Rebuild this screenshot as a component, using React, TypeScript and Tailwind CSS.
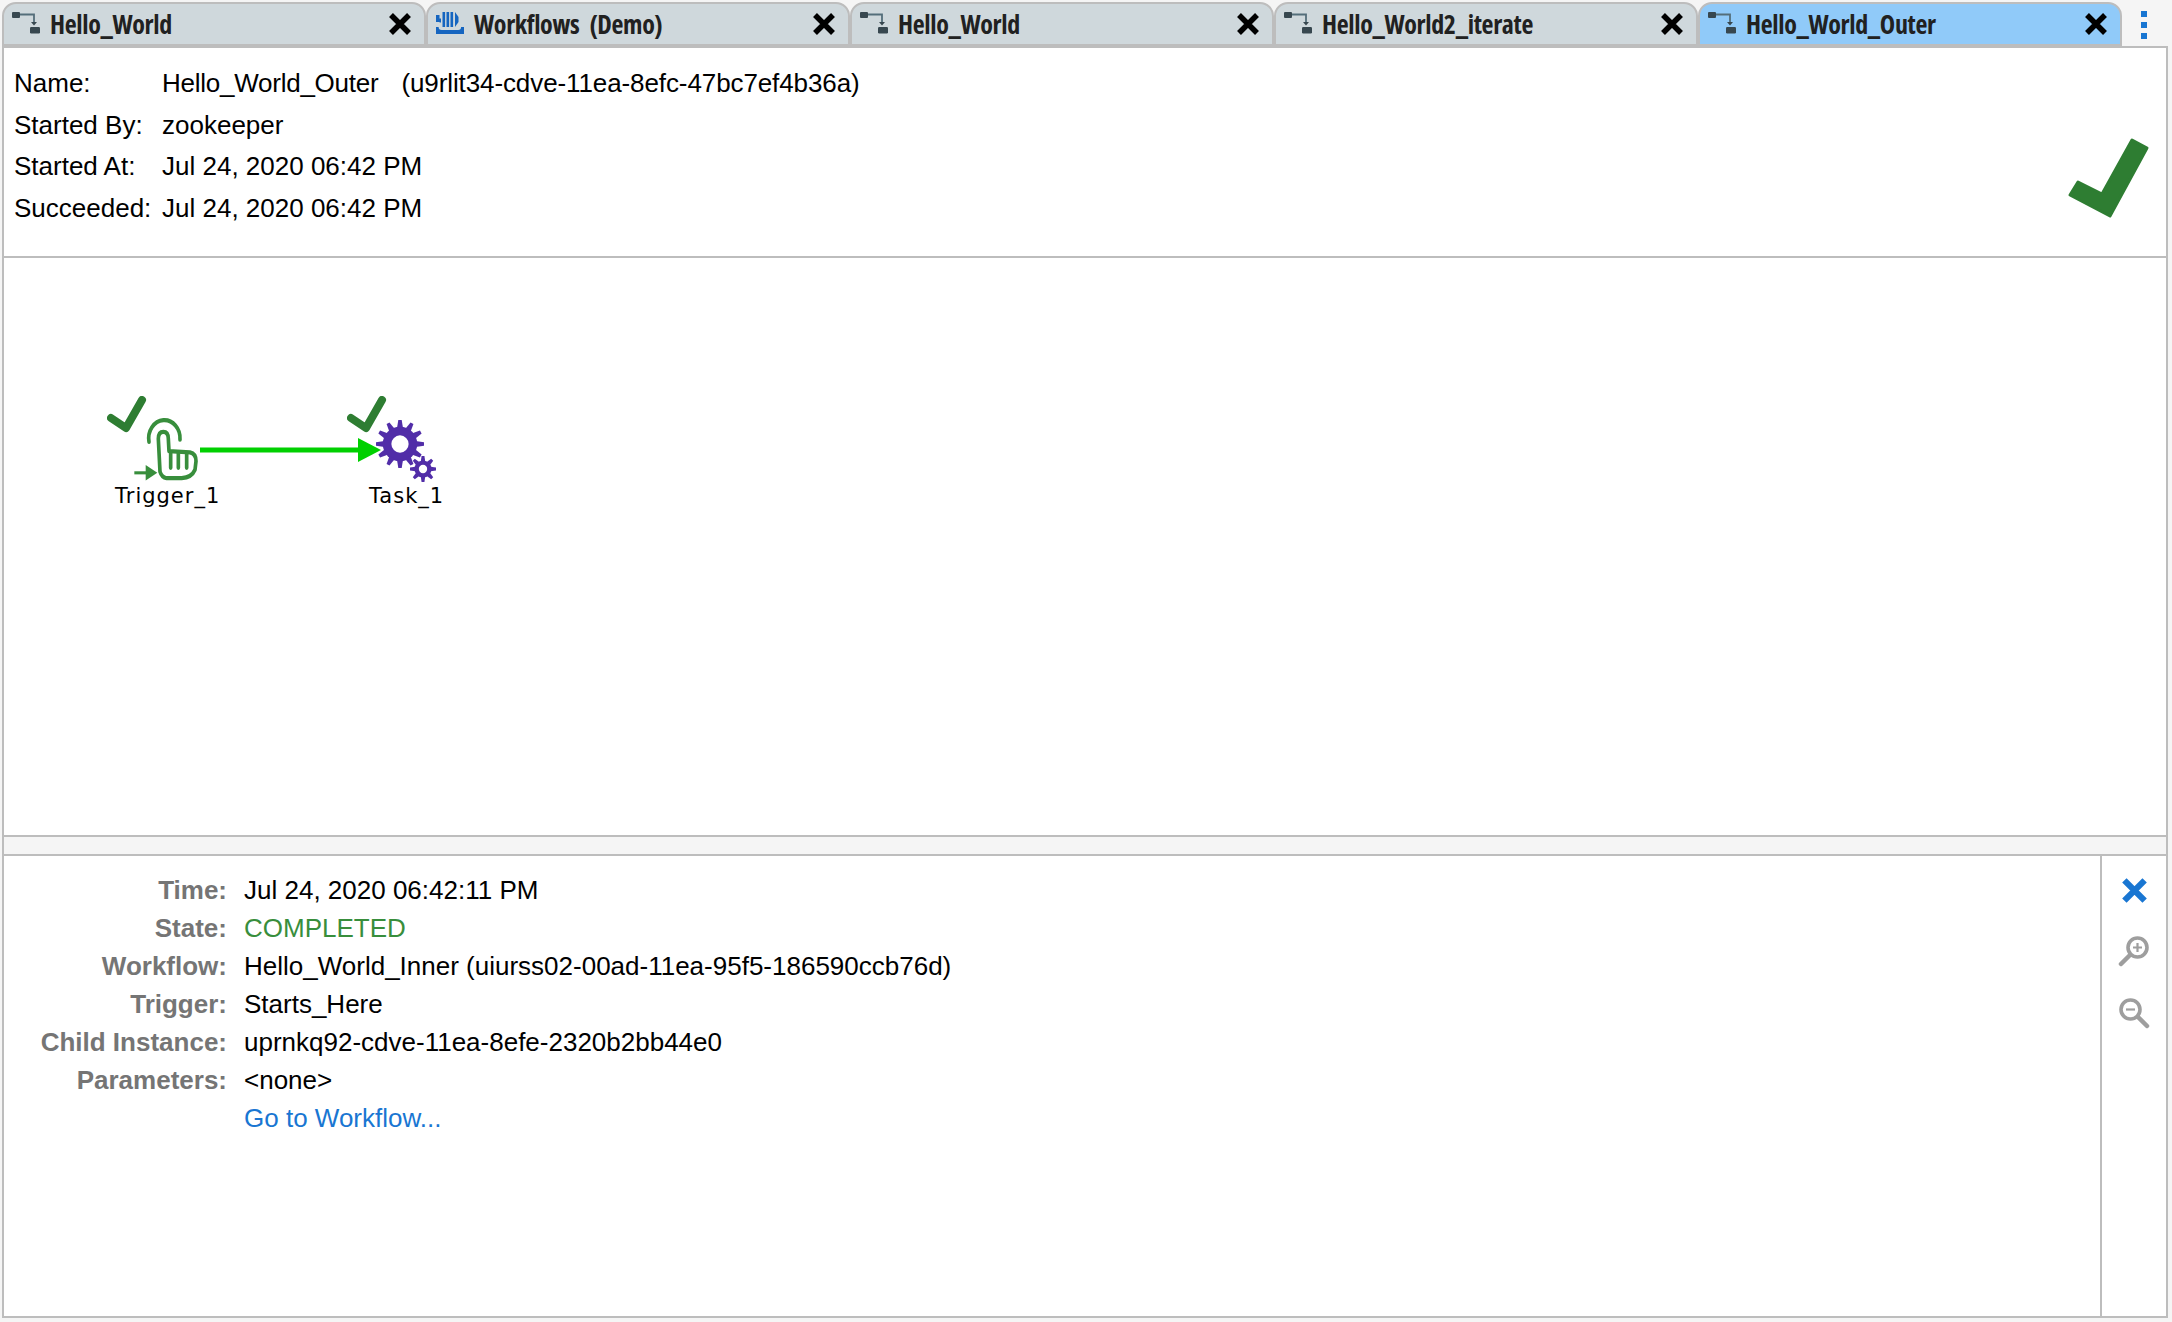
const tabs = [
  { name: "Hello_World", icon: "flow" },
  { name: "Workflows (Demo)", icon: "demo" },
  { name: "Hello_World", icon: "flow" },
  { name: "Hello_World2_iterate", icon: "flow" },
  { name: "Hello_World_Outer", icon: "flow", active: true },
];

const headerRows = [
  ["Name:", "Hello_World_Outer", "(u9rlit34-cdve-11ea-8efc-47bc7ef4b36a)"],
  ["Started By:", "zookeeper"],
  ["Started At:", "Jul 24, 2020 06:42 PM"],
  ["Succeeded:", "Jul 24, 2020 06:42 PM"],
];

const FlowIcon = () => (
  <svg width="28" height="22" viewBox="0 0 28 22" className="shrink-0">
    <rect x="0" y="0" width="8" height="6" rx="1" fill="#37474f" />
    <path d="M8 2.5h14v9" fill="none" stroke="#546e7a" strokeWidth="1.8" />
    <path d="M19 10h6l-3 3.5z" fill="#37474f" />
    <rect x="18" y="15" width="10" height="6.5" rx="1.2" fill="#37474f" />
  </svg>
);

const DemoIcon = () => (
  <svg width="28" height="22" viewBox="0 0 28 22" className="shrink-0">
    <g fill="#1565c0">
      <rect x="6.5" y="0" width="2.6" height="15" />
      <rect x="10.5" y="0" width="2.6" height="15" />
      <rect x="14.5" y="0" width="2.6" height="15" />
      <path d="M19 0l3.5 5v5l-3.5 5z" />
      <path d="M0 3h3.5v3.5H5v4H3.5V10H0z" />
      <path d="M0 15h2.6q0 3 3 3h16.5q3 0 3-3H28v7H0z" />
    </g>
  </svg>
);

const CloseIcon = ({ color = "#000000", size = 24 }: { color?: string; size?: number }) => (
  <svg width={size} height={size} viewBox="0 0 20 20" className="shrink-0">
    <path d="M2.5 2.5l15 15M17.5 2.5l-15 15" stroke={color} strokeWidth="4.6" />
  </svg>
);

const Check = () => (
  <svg width="40" height="38" viewBox="0 0 40 38">
    <path d="M4 22l15 10L35 4" fill="none" stroke="#2e7d32" strokeWidth="8" strokeLinejoin="round" strokeLinecap="round" />
  </svg>
);

const Gear = ({ size, teeth, body, hole, base, tip }: { size: number; teeth: number; body: number; hole: number; base: number; tip: number }) => {
  const angles = Array.from({ length: teeth }, (_, i) => (i * 360) / teeth);
  return (
    <svg width={size} height={size} viewBox="-50 -50 100 100" className="block">
      <circle r={body} fill="#512da8" />
      {angles.map((a) => (
        <polygon
          key={a}
          points={`${-base / 2},${-body + 4} ${-tip / 2},-50 ${tip / 2},-50 ${base / 2},${-body + 4}`}
          fill="#512da8"
          transform={`rotate(${a})`}
        />
      ))}
      <circle r={hole} fill="#ffffff" />
    </svg>
  );
};

export default function App() {
  return (
    <div className="w-[2172px] h-[1322px] bg-[#f5f5f5] flex flex-col overflow-hidden font-['Liberation_Sans',Arial,sans-serif] text-black">
      {/* tab strip */}
      <div className="flex h-[46px] pt-[2px] pl-[2px] items-start relative">
        {tabs.map((t, i) => (
          <div
            key={i}
            className={`w-[424px] h-[44px] flex items-center pl-[8px] pr-[12px] rounded-t-[14px] border-2 border-[#bdbdbd] ${t.active ? "bg-[#90caf9]" : "bg-[#cfd8dc]"}`}
          >
            <div className="-mt-[3px]">{t.icon === "flow" ? <FlowIcon /> : <DemoIcon />}</div>
            <span className="ml-[10px] flex-1 text-[26px] tracking-[-0.35px] [word-spacing:6px] font-bold font-stretch-condensed text-[#212121] font-['Open_Sans',sans-serif]">{t.name}</span>
            <CloseIcon />
          </div>
        ))}
        <div className="ml-[19px] mt-[9px] flex flex-col gap-[5px]">
          <div className="w-[6px] h-[6px] bg-[#1976d2]" />
          <div className="w-[6px] h-[6px] bg-[#1976d2]" />
          <div className="w-[6px] h-[6px] bg-[#1976d2]" />
        </div>
      </div>

      <div className="w-[2166px] h-[1272px] ml-[2px] border-2 border-[#bdbdbd] bg-white flex flex-col">
        {/* instance summary */}
        <div className="h-[210px] shrink-0 border-b-2 border-[#bdbdbd] relative pt-[15px] pl-[10px] text-[26px]">
          {headerRows.map((r) => (
            <div key={r[0]} className="h-[41.6px] flex items-center">
              <span className="w-[148px] shrink-0">{r[0]}</span>
              <span className={r[2] ? "tracking-[-0.25px]" : ""}>{r[1]}</span>
              {r[2] && <span className="ml-[23px] tracking-[-0.1px]">{r[2]}</span>}
            </div>
          ))}
          <svg width="90" height="90" viewBox="0 0 90 90" className="absolute right-[11px] top-[87px]">
            <path d="M5 60L13 47L37 59L67 5L82 13L45 81z" fill="#2e7d32" stroke="#2e7d32" strokeWidth="3" strokeLinejoin="round" />
          </svg>
        </div>

        {/* diagram canvas */}
        <div className="relative flex-1">
          <div className="absolute left-[103px] top-[138px]"><Check /></div>
          <div className="absolute left-[343px] top-[138px]"><Check /></div>

          <svg width="90" height="87" viewBox="0 0 270 225" preserveAspectRatio="none" className="absolute left-[121px] top-[146px]">
            <g fill="none" stroke="#388e3c" strokeWidth="11" strokeLinecap="round" strokeLinejoin="round">
              <path d="M72 98A47 47 0 1 1 165 92" />
              <path d="M105 175L100 90Q100 72 115 72Q130 72 130 90L132 122L195 125Q213 128 213 148L210 170Q200 190 170 192L125 192Q110 190 105 175Z" />
              <path d="M137 125V165M160 128V165M185 130V165" />
            </g>
            <path d="M28 178H70" stroke="#388e3c" strokeWidth="8" />
            <path d="M62 158L97 178L62 198z" fill="#388e3c" />
          </svg>

          <svg width="190" height="30" viewBox="0 0 190 30" className="absolute left-[194px] top-[177px]">
            <path d="M2 15h170" stroke="#00d000" strokeWidth="5" />
            <path d="M160 3l23 12-23 12z" fill="#00d000" />
          </svg>

          <div className="absolute left-[372px] top-[162px]"><Gear size={48} teeth={12} body={36} hole={18} base={13} tip={7} /></div>
          <div className="absolute left-[406px] top-[198px]"><Gear size={26} teeth={8} body={33} hole={16} base={17} tip={11} /></div>

          <div className="absolute left-[111px] top-[224px] text-[21px] tracking-[1px] leading-[28px] font-['DejaVu_Sans',sans-serif]">Trigger_1</div>
          <div className="absolute left-[365px] top-[224px] text-[21px] tracking-[1px] leading-[28px] font-['DejaVu_Sans',sans-serif]">Task_1</div>
        </div>

        {/* splitter */}
        <div className="h-[21px] shrink-0 bg-[#f5f5f5] border-y-2 border-[#bdbdbd]" />

        {/* event detail */}
        <div className="h-[460px] shrink-0 flex">
          <div className="flex-1 pt-[15px] text-[26px] grid grid-cols-[223px_1fr] content-start gap-x-[17px] auto-rows-[38px] items-center">
            <span className="text-right font-bold text-[#757575]">Time:</span>
            <span>Jul 24, 2020 06:42:11 PM</span>
            <span className="text-right font-bold text-[#757575]">State:</span>
            <span className="text-[#388e3c]">COMPLETED</span>
            <span className="text-right font-bold text-[#757575]">Workflow:</span>
            <span>Hello_World_Inner (uiurss02-00ad-11ea-95f5-186590ccb76d)</span>
            <span className="text-right font-bold text-[#757575]">Trigger:</span>
            <span>Starts_Here</span>
            <span className="text-right font-bold text-[#757575]">Child Instance:</span>
            <span>uprnkq92-cdve-11ea-8efe-2320b2bb44e0</span>
            <span className="text-right font-bold text-[#757575]">Parameters:</span>
            <span>&lt;none&gt;</span>
            <span />
            <span className="text-[#1976d2]">Go to Workflow...</span>
          </div>
          <div className="w-[66px] shrink-0 border-l-2 border-[#bdbdbd] flex flex-col items-center pt-[21px]">
            <CloseIcon color="#1976d2" size={27} />
            <svg width="32" height="32" viewBox="0 0 32 32" className="mt-[31px]">
              <circle cx="19.5" cy="12.5" r="9.5" fill="none" stroke="#9e9e9e" strokeWidth="3.6" />
              <path d="M12 20L3 29" stroke="#9e9e9e" strokeWidth="4.5" strokeLinecap="round" />
              <path d="M19.5 8v9M15 12.5h9" stroke="#9e9e9e" strokeWidth="2.2" />
            </svg>
            <svg width="32" height="32" viewBox="0 0 32 32" className="mt-[30px]">
              <circle cx="12.5" cy="12.5" r="9.5" fill="none" stroke="#9e9e9e" strokeWidth="3.6" />
              <path d="M20 20l9 9" stroke="#9e9e9e" strokeWidth="4.5" strokeLinecap="round" />
              <path d="M8 12.5h9" stroke="#9e9e9e" strokeWidth="2.2" />
            </svg>
          </div>
        </div>
      </div>
    </div>
  );
}
